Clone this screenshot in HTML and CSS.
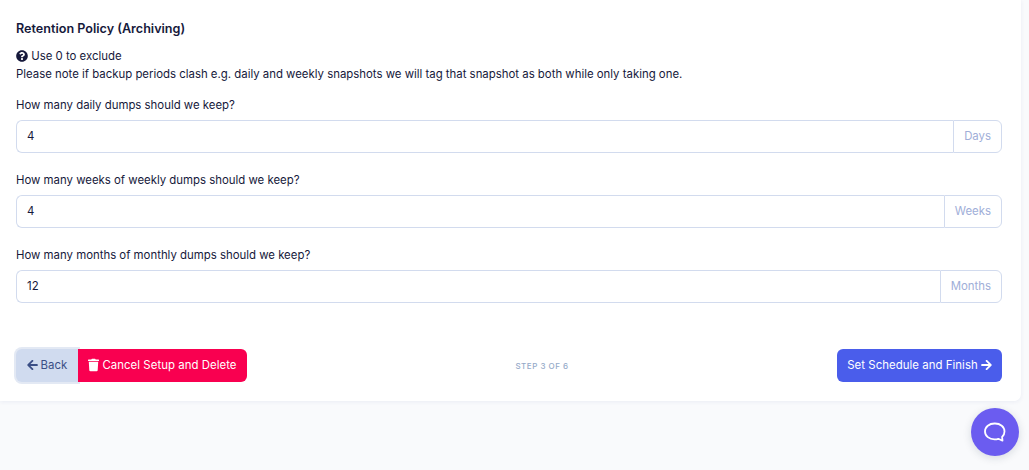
FILE: index.html
```html
<!DOCTYPE html>
<html lang="en">
<head>
    <meta charset="UTF-8">
    <title>Retention Policy</title>
    <link rel="stylesheet" href="styles.css">
</head>
<body>
    <div class="card">
        <h2 class="card-title">Retention Policy (Archiving)</h2>
        <p class="hint">
            <svg class="icon-help" viewBox="0 0 512 512" width="12" height="12"><path fill="#16193b" d="M504 256c0 137-111 248-248 248S8 393 8 256 119 8 256 8s248 111 248 248zM262.700 90c-54.500 0-89.300 23-116.500 63.800-3.500 5.300-2.400 12.400 2.700 16.300l34.700 26.300c5.200 3.900 12.600 3 16.700-2.100 17.900-22.700 30.100-35.800 57.300-35.800 20.400 0 45.700 13.100 45.700 33 0 15-12.400 22.700-32.600 34-23.600 13.200-54.800 29.700-54.800 70.900V300c0 6.600 5.400 12 12 12h56c6.600 0 12-5.400 12-12v-1.300c0-28.600 83.500-29.800 83.500-107.200C378.500 133.200 317.900 90 262.700 90zM256 339c-25.500 0-46.200 20.700-46.200 46.200 0 25.500 20.700 46.200 46.200 46.200s46.200-20.700 46.200-46.200c0-25.500-20.700-46.200-46.200-46.200z"/></svg>
            Use 0 to exclude<br>
            Please note if backup periods clash e.g. daily and weekly snapshots we will tag that snapshot as both while only taking one.
        </p>

        <div class="field">
            <label class="field-label">How many daily dumps should we keep?</label>
            <div class="input-group">
                <input class="field-input" type="text" value="4">
                <span class="addon">Days</span>
            </div>
        </div>
        <div class="field">
            <label class="field-label">How many weeks of weekly dumps should we keep?</label>
            <div class="input-group">
                <input class="field-input" type="text" value="4">
                <span class="addon">Weeks</span>
            </div>
        </div>
        <div class="field">
            <label class="field-label">How many months of monthly dumps should we keep?</label>
            <div class="input-group">
                <input class="field-input" type="text" value="12">
                <span class="addon">Months</span>
            </div>
        </div>

        <div class="actions">
            <div class="actions-left">
                <button class="btn btn-back">
                    <svg viewBox="0 0 448 512" width="11" height="12"><path fill="currentColor" d="M257.500 445.100l-22.200 22.200c-9.400 9.400-24.600 9.400-33.900 0L7 273c-9.400-9.400-9.400-24.600 0-33.900L201.400 44.700c9.400-9.400 24.600-9.400 33.900 0l22.200 22.200c9.500 9.500 9.300 25-.4 34.300L136.600 216H424c13.300 0 24 10.700 24 24v32c0 13.300-10.700 24-24 24H136.600l120.500 114.800c9.800 9.300 10 24.800.4 34.300z"/></svg>
                    Back
                </button>
                <button class="btn btn-cancel">
                    <svg viewBox="0 0 448 512" width="11" height="14"><path fill="currentColor" d="M432 32H312l-9.400-18.700A24 24 0 0 0 281.100 0H166.800a23.700 23.700 0 0 0-21.400 13.300L136 32H16A16 16 0 0 0 0 48v32a16 16 0 0 0 16 16h416a16 16 0 0 0 16-16V48a16 16 0 0 0-16-16zM53.200 467a48 48 0 0 0 47.900 45h245.800a48 48 0 0 0 47.900-45L416 128H32z"/></svg>
                    Cancel Setup and Delete
                </button>
            </div>
            <span class="step">STEP 3 OF 6</span>
            <button class="btn btn-finish">
                Set Schedule and Finish
                <svg viewBox="0 0 448 512" width="11" height="12"><path fill="currentColor" d="M190.500 66.900l22.200-22.200c9.400-9.400 24.600-9.400 33.900 0L441 239c9.400 9.400 9.400 24.600 0 33.900L246.600 467.300c-9.400 9.400-24.600 9.400-33.900 0l-22.200-22.200c-9.500-9.500-9.300-25 .4-34.300L311.400 296H24c-13.300 0-24-10.700-24-24v-32c0-13.300 10.700-24 24-24h287.400L190.900 101.200c-9.800-9.300-10-24.800-.4-34.300z"/></svg>
            </button>
        </div>
    </div>

    <button class="chat-bubble">
        <svg viewBox="0 0 24 24" width="24" height="24"><path fill="none" stroke="#fff" stroke-width="1.800" stroke-linejoin="round" d="M12 3.500c5.300 0 9.500 3.300 9.500 8 0 2.300-.9 4.100-2.400 5.500l.4 3.700-4.200-1.900c-1.100.4-2.400.6-3.800.6-5.200 0-9.500-3.300-9.500-7.900 0-4.700 4.300-8 9.500-8z"/></svg>
    </button>
</body>
</html>
```

FILE: styles.css
```css
* {
    box-sizing: border-box;
}
body {
    margin: 0;
    height: 470px;
    overflow: hidden;
    background-color: #f9fafc;
    font-family: Inter, "Liberation Sans", sans-serif;
    font-size: 11.400px;
    color: #16193b;
}
.card {
    width: 1021px;
    height: 401px;
    padding: 20px 19px 0 16px;
    background-color: #fff;
    border-radius: 0 0 7px 0;
    box-shadow: 0 1px 4px rgba(40, 60, 140, 0.07);
}
.card-title {
    margin: 0;
    font-size: 12.600px;
    line-height: 17px;
    font-weight: 600;
}
.hint {
    margin: 10px 0 0;
    line-height: 18px;
}
.icon-help {
    vertical-align: -2px;
}
.field {
    margin-bottom: 18px;
}
.hint + .field {
    margin-top: 13px;
}
.field-label {
    display: block;
    line-height: 18px;
    margin-bottom: 6px;
}
.input-group {
    display: flex;
    height: 33px;
}
.field-input {
    flex: 1;
    min-width: 0;
    padding: 0 10px 2px;
    border: 1px solid #d2dbee;
    border-right: 0;
    border-radius: 6px 0 0 6px;
    font: inherit;
    color: #16193b;
    outline: none;
}
.addon {
    display: flex;
    align-items: center;
    padding: 0 10px 2px;
    border: 1px solid #d2dbee;
    border-radius: 0 6px 6px 0;
    color: #a0aed8;
}
.actions {
    position: relative;
    display: flex;
    align-items: center;
    justify-content: space-between;
    margin-top: 46px;
}
.actions-left {
    display: flex;
}
.btn {
    display: flex;
    align-items: center;
    justify-content: center;
    gap: 3px;
    height: 33px;
    padding: 0 0 1px;
    border: 0;
    border-radius: 6px;
    font: inherit;
    letter-spacing: 0.050px;
    white-space: nowrap;
    cursor: pointer;
}
.btn-back {
    width: 62px;
    background-color: #d0dbef;
    color: #3b4f86;
    border-radius: 6px 0 0 6px;
    box-shadow: 0 0 0 2px #e3e9f4;
}
.btn-cancel {
    width: 169px;
    background-color: #f90050;
    color: #fff;
    border-radius: 0 6px 6px 0;
}
.btn-finish {
    width: 165px;
    background-color: #4a5deb;
    color: #fff;
}
.step {
    font-size: 8px;
    letter-spacing: 0.500px;
    font-weight: 500;
    color: #95aac9;
}
.chat-bubble {
    position: absolute;
    left: 971px;
    top: 408px;
    display: flex;
    align-items: center;
    justify-content: center;
    width: 48px;
    height: 48px;
    padding: 0;
    border: 0;
    border-radius: 50%;
    background-color: #6b5cf0;
    box-shadow: 0 2px 8px rgba(18, 38, 63, 0.15);
}
```
